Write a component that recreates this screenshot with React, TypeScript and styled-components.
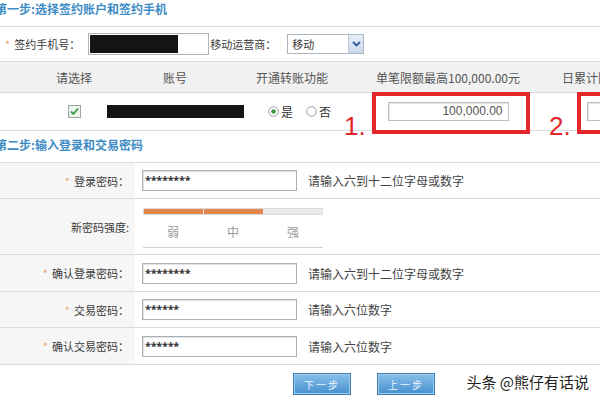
import React from "react";
import styled, { createGlobalStyle } from "styled-components";

const Global = createGlobalStyle`
  html, body { margin: 0; padding: 0; background: #fff; }
  body {
    font-family: "Noto Sans CJK SC", "Noto Sans", sans-serif;
    font-size: 11px;
    color: #404040;
  }
`;

const Page = styled.div`
  position: relative;
  width: 600px;
  height: 400px;
  overflow: hidden;
  background: #fff;
`;

const SectionTitle = styled.div<{ $h: number; $pt: number }>`
  height: ${(p) => p.$h}px;
  box-sizing: border-box;
  padding-top: ${(p) => p.$pt}px;
  margin-left: -5px;
  font-size: 12px;
  font-weight: bold;
  line-height: 16px;
  color: #3d8cc4;
  white-space: nowrap;
  border-bottom: 1px solid #dcdcdc;
`;

const PhoneRow = styled.div`
  display: flex;
  align-items: center;
  height: 35px;
  box-sizing: border-box;
  border-bottom: 1px solid #dcdcdc;
  padding-left: 5px;
  white-space: nowrap;
`;

const Star = styled.span`
  color: #f0a66a;
  font-size: 11px;
  margin-right: 4px;
`;

const FieldLabel = styled.span<{ $ml?: number }>`
  font-size: 11px;
  color: #3c3c3c;
  margin-left: ${(p) => p.$ml ?? 0}px;
`;

const PhoneBox = styled.div`
  width: 121px;
  height: 22px;
  box-sizing: border-box;
  border: 1px solid #b4b4b4;
  margin-left: 8px;
  padding: 1px;
  display: flex;
`;

const Redact = styled.div<{ $w: number; $h: number }>`
  width: ${(p) => p.$w}px;
  height: ${(p) => p.$h}px;
  background: #141414;
  flex-shrink: 0;
`;

const Select = styled.div`
  width: 77px;
  height: 20px;
  box-sizing: border-box;
  border: 1px solid #a9b6c4;
  margin-left: 11px;
  display: flex;
  align-items: center;
  justify-content: space-between;
  padding-left: 4px;
  font-size: 11px;
  color: #333;
  background: #fff;
`;

const SelectArrow = styled.div`
  width: 14px;
  height: 18px;
  background: linear-gradient(#e6eef8, #c9d8ea);
  border-left: 1px solid #b9c8da;
  display: flex;
  align-items: center;
  justify-content: center;
`;

const Grid = "48px 52px 150px 84px 228px 120px";

const HeadRow = styled.div`
  display: grid;
  grid-template-columns: ${Grid};
  height: 31px;
  box-sizing: border-box;
  background: #f1f1f1;
  border-bottom: 1px solid #dcdcdc;
  align-items: center;
  white-space: nowrap;
`;

const HeadCell = styled.div<{ $left?: boolean }>`
  font-size: 12px;
  color: #555;
  text-align: ${(p) => (p.$left ? "left" : "center")};
  overflow: visible;
`;

const DataRow = styled.div`
  position: relative;
  display: grid;
  grid-template-columns: ${Grid};
  height: 38px;
  box-sizing: border-box;
  border-bottom: 1px solid #dcdcdc;
  align-items: center;
`;

const Cell = styled.div<{ $justify?: string; $pl?: number }>`
  display: flex;
  align-items: center;
  justify-content: ${(p) => p.$justify ?? "center"};
  padding-left: ${(p) => p.$pl ?? 0}px;
  min-width: 0;
`;

const RadioGroup = styled.div`
  display: flex;
  align-items: center;
  gap: 13px;
  white-space: nowrap;
`;

const RadioItem = styled.label`
  display: flex;
  align-items: center;
  gap: 2px;
  font-size: 12px;
  color: #333;
  svg { flex-shrink: 0; }
`;

const AmountInput = styled.div<{ $w: number }>`
  width: ${(p) => p.$w}px;
  height: 19px;
  flex-shrink: 0;
  box-sizing: border-box;
  border: 1px solid #b9c1c9;
  box-shadow: inset 1px 1px 1px #e4e4e4;
  font-family: "Liberation Sans", Arial, sans-serif;
  font-size: 12px;
  line-height: 17px;
  color: #555;
  text-align: right;
  padding-right: 5px;
`;

const RedBox = styled.div<{ $left: number; $w: number }>`
  position: absolute;
  left: ${(p) => p.$left}px;
  top: -1px;
  width: ${(p) => p.$w}px;
  height: 42px;
  box-sizing: border-box;
  border: 4px solid #e3262b;
`;

const RedNum = styled.div<{ $left: number }>`
  position: absolute;
  left: ${(p) => p.$left}px;
  top: 20px;
  font-family: "Liberation Sans", Arial, sans-serif;
  font-size: 26px;
  line-height: 26px;
  color: #e3262b;
`;

const FormRow = styled.div<{ $h: number }>`
  display: grid;
  grid-template-columns: 135px 1fr;
  height: ${(p) => p.$h}px;
  box-sizing: border-box;
  border-bottom: 1px solid #dcdcdc;
`;

const LabelCell = styled.div`
  background: #f6f6f6;
  display: flex;
  align-items: center;
  justify-content: flex-end;
  padding-right: 6px;
  font-size: 11px;
  color: #3c3c3c;
  white-space: nowrap;
`;

const ValueCell = styled.div`
  display: flex;
  align-items: center;
  padding-left: 7px;
`;

const PwInput = styled.div`
  width: 155px;
  height: 21px;
  flex-shrink: 0;
  box-sizing: border-box;
  border: 1px solid #a8b2ba;
  box-shadow: inset 1px 1px 1px #e2e2e2;
  padding-left: 2px;
  font-family: "Noto Sans", sans-serif;
  font-size: 11px;
  font-weight: bold;
  line-height: 17px;
  color: #333;
  letter-spacing: -0.3px;
`;

const Hint = styled.span`
  margin-left: 11px;
  font-size: 12px;
  color: #444;
  white-space: nowrap;
`;

const Strength = styled.div`
  width: 180px;
  margin-left: 1px;
  padding-top: 9px;
  padding-bottom: 7px;
  border-bottom: 1px solid #cfcfcf;
  align-self: flex-start;
`;

const Track = styled.div`
  height: 7px;
  box-sizing: border-box;
  background: #ececec;
  border: 1px solid #dadada;
  border-radius: 1px;
  display: flex;
  gap: 1px;
`;

const Fill = styled.div`
  width: 59px;
  height: 100%;
  background: #e3874c;
`;

const Levels = styled.div`
  display: grid;
  grid-template-columns: repeat(3, 60px);
  margin-top: 9px;
  font-size: 12px;
  line-height: 16px;
  color: #9a9a9a;
  text-align: center;
`;

const ButtonBar = styled.div`
  display: flex;
  align-items: center;
  gap: 26px;
  height: 34px;
  padding-left: 293px;
  padding-top: 2px;
  border-bottom: 1px solid #dcdcdc;
`;

const BlueButton = styled.div`
  width: 58px;
  height: 22px;
  box-sizing: border-box;
  border: 1px solid #3f7fb6;
  box-shadow: inset 0 0 0 1px #9ccbee;
  background: linear-gradient(#88c0e9, #4690cf);
  color: #eef6ff;
  font-size: 10px;
  letter-spacing: 2px;
  display: flex;
  align-items: center;
  justify-content: center;
`;

const Watermark = styled.div`
  position: absolute;
  right: 11px;
  bottom: 8px;
  font-size: 15px;
  color: #1e1e1e;
  white-space: nowrap;
  font-family: "Noto Sans CJK SC", sans-serif;
`;

const CheckIcon = () => (
  <svg width="13" height="13" viewBox="0 0 13 13">
    <rect x="0.5" y="0.5" width="12" height="12" fill="#eef5ee" stroke="#9aa6a0" />
    <polyline points="3,6.5 5.5,9 10,3.5" fill="none" stroke="#3a9a44" strokeWidth="1.8" />
  </svg>
);

const RadioIcon = ({ on }: { on?: boolean }) => (
  <svg width="11" height="11" viewBox="0 0 11 11">
    <circle cx="5.5" cy="5.5" r="4.8" fill="#fff" stroke="#9a9a9a" />
    {on && <circle cx="5.5" cy="5.5" r="2.3" fill="#3a9a44" />}
  </svg>
);

const Chevron = () => (
  <svg width="9" height="6" viewBox="0 0 9 6">
    <polyline points="1,1 4.5,4.5 8,1" fill="none" stroke="#2d5d98" strokeWidth="1.8" />
  </svg>
);

const rows = [
  { label: "确认登录密码：", value: "********", hint: "请输入六到十二位字母或数字", h: 37 },
  { label: "交易密码：", value: "******", hint: "请输入六位数字", h: 36 },
  { label: "确认交易密码：", value: "******", hint: "请输入六位数字", h: 37 },
];

export default function App() {
  return (
    <Page>
      <Global />
      <SectionTitle $h={27} $pt={1}>第一步:选择签约账户和签约手机</SectionTitle>
      <PhoneRow>
        <Star>*</Star>
        <FieldLabel>签约手机号：</FieldLabel>
        <PhoneBox>
          <Redact $w={88} $h={18} />
        </PhoneBox>
        <FieldLabel $ml={1}>移动运营商：</FieldLabel>
        <Select>
          移动
          <SelectArrow>
            <Chevron />
          </SelectArrow>
        </Select>
      </PhoneRow>
      <HeadRow>
        <HeadCell />
        <HeadCell>请选择</HeadCell>
        <HeadCell>账号</HeadCell>
        <HeadCell>开通转账功能</HeadCell>
        <HeadCell>单笔限额最高100,000.00元</HeadCell>
        <HeadCell $left>日累计限额最高</HeadCell>
      </HeadRow>
      <DataRow>
        <Cell />
        <Cell>
          <CheckIcon />
        </Cell>
        <Cell>
          <Redact $w={137} $h={13} />
        </Cell>
        <Cell $justify="flex-start" $pl={18}>
          <RadioGroup>
            <RadioItem>
              <RadioIcon on />是
            </RadioItem>
            <RadioItem>
              <RadioIcon />否
            </RadioItem>
          </RadioGroup>
        </Cell>
        <Cell>
          <AmountInput $w={121}>100,000.00</AmountInput>
        </Cell>
        <Cell $justify="flex-start" $pl={25}>
          <AmountInput $w={121} />
        </Cell>
        <RedNum $left={344}>1.</RedNum>
        <RedBox $left={372} $w={158} />
        <RedNum $left={549}>2.</RedNum>
        <RedBox $left={577} $w={80} />
      </DataRow>
      <SectionTitle $h={32} $pt={6}>第二步:输入登录和交易密码</SectionTitle>
      <FormRow $h={36}>
        <LabelCell>
          <Star>*</Star>登录密码：
        </LabelCell>
        <ValueCell>
          <PwInput>********</PwInput>
          <Hint>请输入六到十二位字母或数字</Hint>
        </ValueCell>
      </FormRow>
      <FormRow $h={56}>
        <LabelCell>新密码强度:</LabelCell>
        <ValueCell>
          <Strength>
            <Track>
              <Fill />
              <Fill />
            </Track>
            <Levels>
              <span>弱</span>
              <span>中</span>
              <span>强</span>
            </Levels>
          </Strength>
        </ValueCell>
      </FormRow>
      {rows.map((r) => (
        <FormRow key={r.label} $h={r.h}>
          <LabelCell>
            <Star>*</Star>
            {r.label}
          </LabelCell>
          <ValueCell>
            <PwInput>{r.value}</PwInput>
            <Hint>{r.hint}</Hint>
          </ValueCell>
        </FormRow>
      ))}
      <ButtonBar>
        <BlueButton>下一步</BlueButton>
        <BlueButton>上一步</BlueButton>
      </ButtonBar>
      <Watermark>头条 @熊仔有话说</Watermark>
    </Page>
  );
}
